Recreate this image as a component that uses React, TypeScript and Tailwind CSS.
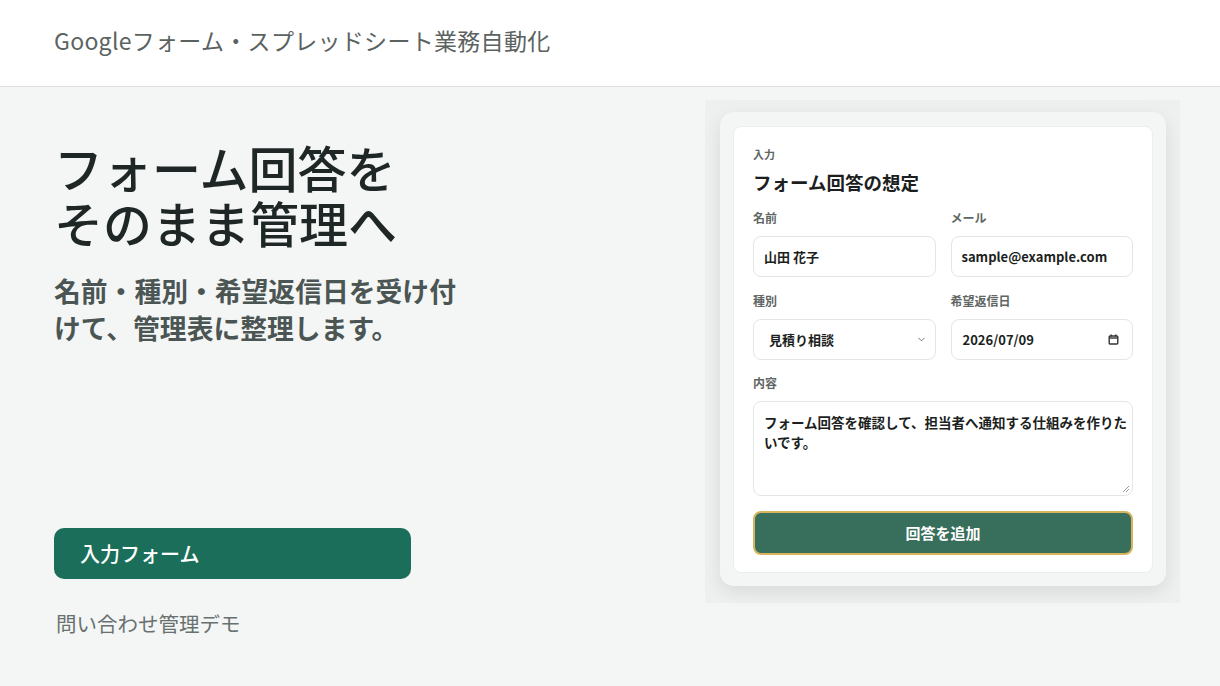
import { ChevronDown } from 'lucide-react';

const font = "font-['Noto_Sans_CJK_JP','Noto_Sans',sans-serif]";

function Label({ children }: { children: React.ReactNode }) {
  return <div className="text-[12px] leading-[16px] font-bold text-[#5f6664]">{children}</div>;
}

function Field({ children, className = '' }: { children: React.ReactNode; className?: string }) {
  return (
    <div
      className={`mt-[10px] h-[41px] flex items-center rounded-[8px] border border-[#e3e6e5] bg-white text-[13px] font-bold text-[#1c1f1e] ${className}`}
    >
      {children}
    </div>
  );
}

function CalendarIcon() {
  return (
    <svg width="11" height="11" viewBox="0 0 11 11" fill="none" stroke="#333" strokeWidth="1.4">
      <rect x="1.2" y="2" width="8.6" height="8" rx="1" />
      <line x1="1.2" y1="4" x2="9.8" y2="4" />
      <line x1="3.2" y1="0.5" x2="3.2" y2="2.5" />
      <line x1="7.8" y1="0.5" x2="7.8" y2="2.5" />
    </svg>
  );
}

function FormPreview() {
  return (
    <div className="w-[475px] h-[503px] bg-[#eef0ef] pt-[12px] pl-[15px] pr-[14px]">
      <div className="h-[474px] rounded-[14px] bg-[#f4f5f5] shadow-[0_6px_18px_rgba(0,0,0,0.09)] pt-[14px] px-[13px]">
        <div className="h-[447px] rounded-[8px] bg-white pt-[20px] px-[19px] border border-[#eceeed]">
          <div className="text-[11px] leading-[14px] font-bold text-[#5f6664]">入力</div>
          <div className="mt-[9px] text-[18.5px] leading-[24px] font-bold text-[#1c1f1e]">フォーム回答の想定</div>

          <div className="mt-[16px] grid grid-cols-2 gap-x-[15px]">
            <div>
              <Label>名前</Label>
              <Field className="pl-[10px]">山田 花子</Field>
            </div>
            <div>
              <Label>メール</Label>
              <Field className="pl-[10px]">sample@example.com</Field>
            </div>
          </div>

          <div className="mt-[16px] grid grid-cols-2 gap-x-[15px]">
            <div>
              <Label>種別</Label>
              <Field className="pl-[15px] pr-[8px] justify-between">
                <span>見積り相談</span>
                <ChevronDown size={11} strokeWidth={1.6} className="text-[#444]" />
              </Field>
            </div>
            <div>
              <Label>希望返信日</Label>
              <Field className="pl-[11px] pr-[13px] justify-between">
                <span>2026/07/09</span>
                <CalendarIcon />
              </Field>
            </div>
          </div>

          <div className="mt-[15px]">
            <Label>内容</Label>
            <div className="relative mt-[10px] h-[95px] rounded-[8px] border border-[#e3e6e5] bg-white pl-[10px] pr-[4px] pt-[10px] text-[13.5px] leading-[20px] font-bold text-[#1c1f1e]">
              フォーム回答を確認して、担当者へ通知する仕組みを作りたいです。
              <svg className="absolute right-[2px] bottom-[2px]" width="8" height="8" viewBox="0 0 8 8" stroke="#999" strokeWidth="1">
                <line x1="1" y1="7" x2="7" y2="1" />
                <line x1="4" y1="7" x2="7" y2="4" />
              </svg>
            </div>
          </div>

          <div className="mt-[15px] h-[44px] rounded-[8px] border-2 border-[#d8b45c] bg-[#376f5c] flex items-center justify-center text-[15px] font-bold text-white">
            回答を追加
          </div>
        </div>
      </div>
    </div>
  );
}

export default function App() {
  return (
    <div className={`w-[1220px] h-[686px] bg-[#f4f6f5] overflow-hidden ${font}`}>
      <header className="h-[87px] bg-white border-b border-[#dde2e0] flex items-center px-[54px] pb-[5px]">
        <span className="text-[23px] tracking-[0.3px] text-[#5b6361]">Googleフォーム・スプレッドシート業務自動化</span>
      </header>

      <main className="flex pl-[54px] pr-[40px]">
        <div className="flex-1 pt-[52px]">
          <h1 className="text-[49px] leading-[55px] font-medium text-[#1e2725]">
            フォーム回答を
            <br />
            そのまま管理へ
          </h1>
          <p className="mt-[23px] max-w-[410px] text-[26.8px] leading-[37px] font-semibold text-[#4b5553]">
            名前・種別・希望返信日を受け付けて、管理表に整理します。
          </p>
          <div className="mt-[182px] w-[357px] h-[51px] rounded-[10px] bg-[#1b6f5a] flex items-center px-[26px] text-[20px] font-medium text-white">
            入力フォーム
          </div>
          <div className="mt-[30px] pl-[2px] text-[20.5px] leading-[28px] text-[#687170]">問い合わせ管理デモ</div>
        </div>
        <div className="pt-[13px]">
          <FormPreview />
        </div>
      </main>
    </div>
  );
}
